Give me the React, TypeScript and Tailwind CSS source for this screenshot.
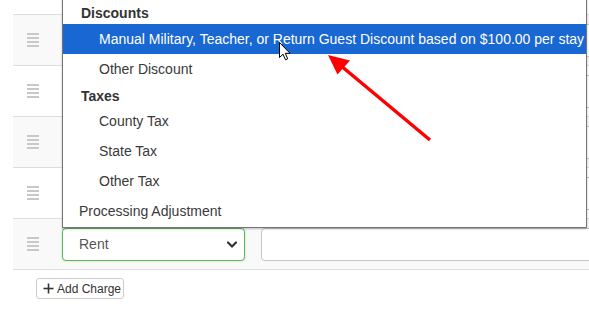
import React from "react";

function Handle() {
  return (
    <div className="flex flex-col gap-[2px]">
      <span className="block w-[12px] h-[2px] bg-[#c8c8c8]" />
      <span className="block w-[12px] h-[2px] bg-[#c8c8c8]" />
      <span className="block w-[12px] h-[2px] bg-[#c8c8c8]" />
      <span className="block w-[12px] h-[2px] bg-[#c8c8c8]" />
    </div>
  );
}

function Chevron() {
  return (
    <svg width="10" height="7" viewBox="0 0 10 7" className="block">
      <polyline points="1,1.5 5,5.5 9,1.5" fill="none" stroke="#333" strokeWidth="2.2" strokeLinecap="round" strokeLinejoin="round" />
    </svg>
  );
}

function Row({ striped, last, focused }: { striped: boolean; last?: boolean; focused?: boolean }) {
  return (
    <div
      className={
        "flex items-center border-t border-[#dddddd] " +
        (striped ? "bg-[#f9f9f9] " : "bg-white ") +
        (last ? "h-[52px] border-b" : "h-[51px]")
      }
    >
      <div className="w-[49px] shrink-0 pl-[14px] flex items-center">
        <Handle />
      </div>
      <div
        className={
          "w-[183px] h-[33px] shrink-0 flex items-center justify-between pl-[16px] pr-[7px] rounded-[4px] bg-white border " +
          (focused ? "border-[#5cb85c] shadow-[0_0_2px_rgba(92,184,92,0.5)]" : "border-[#cccccc]")
        }
      >
        <span className="text-[14px] text-[#555555]">{focused ? "Rent" : ""}</span>
        <Chevron />
      </div>
      <div className="ml-[16px] w-[400px] h-[33px] shrink-0 rounded-[4px] bg-white border border-[#c3c7cb]" />
    </div>
  );
}

export default function App() {
  return (
    <div className="relative w-[589px] h-[311px] overflow-hidden bg-white font-['Liberation_Sans',Arial,sans-serif]">
      <div className="pt-[14px] pl-[13px]">
        <Row striped />
        <Row striped={false} />
        <Row striped />
        <Row striped={false} />
        <Row striped last focused />
      </div>

      <div className="pl-[36px] pt-[8px]">
        <button className="flex items-center gap-[3px] h-[21px] w-[88px] pl-[6px] rounded-[3px] border border-[#cccccc] bg-white text-[12px] text-[#333333]">
          <svg width="11" height="11" viewBox="0 0 11 11" className="block">
            <line x1="5.5" y1="0.5" x2="5.5" y2="10.5" stroke="#333" strokeWidth="1.6" />
            <line x1="0.5" y1="5.5" x2="10.5" y2="5.5" stroke="#333" strokeWidth="1.6" />
          </svg>
          <span>Add Charge</span>
        </button>
      </div>

      <div className="absolute left-[62px] top-[-1px] w-[525px] border border-[#767676] bg-white shadow-[0_1px_2px_rgba(0,0,0,0.25)] text-[14px] text-[#3a3a3a]">
        <div className="h-[24px] pt-[3px] pl-[18px] flex items-center font-bold text-[#333333]">Discounts</div>
        <div className="h-[30px] pl-[36px] flex items-center bg-[#1967d2] text-white whitespace-nowrap">
          Manual Military, Teacher, or Return Guest Discount based on $100.00 per stay
        </div>
        <div className="h-[30px] pl-[36px] flex items-center">Other Discount</div>
        <div className="h-[22px] pt-[3px] pl-[18px] flex items-center font-bold text-[#333333]">Taxes</div>
        <div className="h-[30px] pl-[36px] flex items-center">County Tax</div>
        <div className="h-[30px] pl-[36px] flex items-center">State Tax</div>
        <div className="h-[30px] pl-[36px] flex items-center">Other Tax</div>
        <div className="h-[31px] pb-[1px] pl-[16px] flex items-center">Processing Adjustment</div>
      </div>

      <svg className="absolute left-0 top-0 pointer-events-none" width="589" height="311" viewBox="0 0 589 311">
        <line x1="430" y1="140" x2="340" y2="65" stroke="#ff0000" strokeWidth="3.5" />
        <polygon points="328,55 337.5,74.5 350,60.5" fill="#ff0000" />
      </svg>

      <svg className="absolute left-[279px] top-[42px] pointer-events-none" width="13" height="19" viewBox="0 0 13 19">
        <path d="M0.5,0.5 L0.5,15.5 L4,12.2 L6.5,17.8 L8.7,16.8 L6.3,11.3 L11,11.3 Z" fill="#ffffff" stroke="#000000" strokeWidth="1" strokeLinejoin="miter" />
      </svg>
    </div>
  );
}
